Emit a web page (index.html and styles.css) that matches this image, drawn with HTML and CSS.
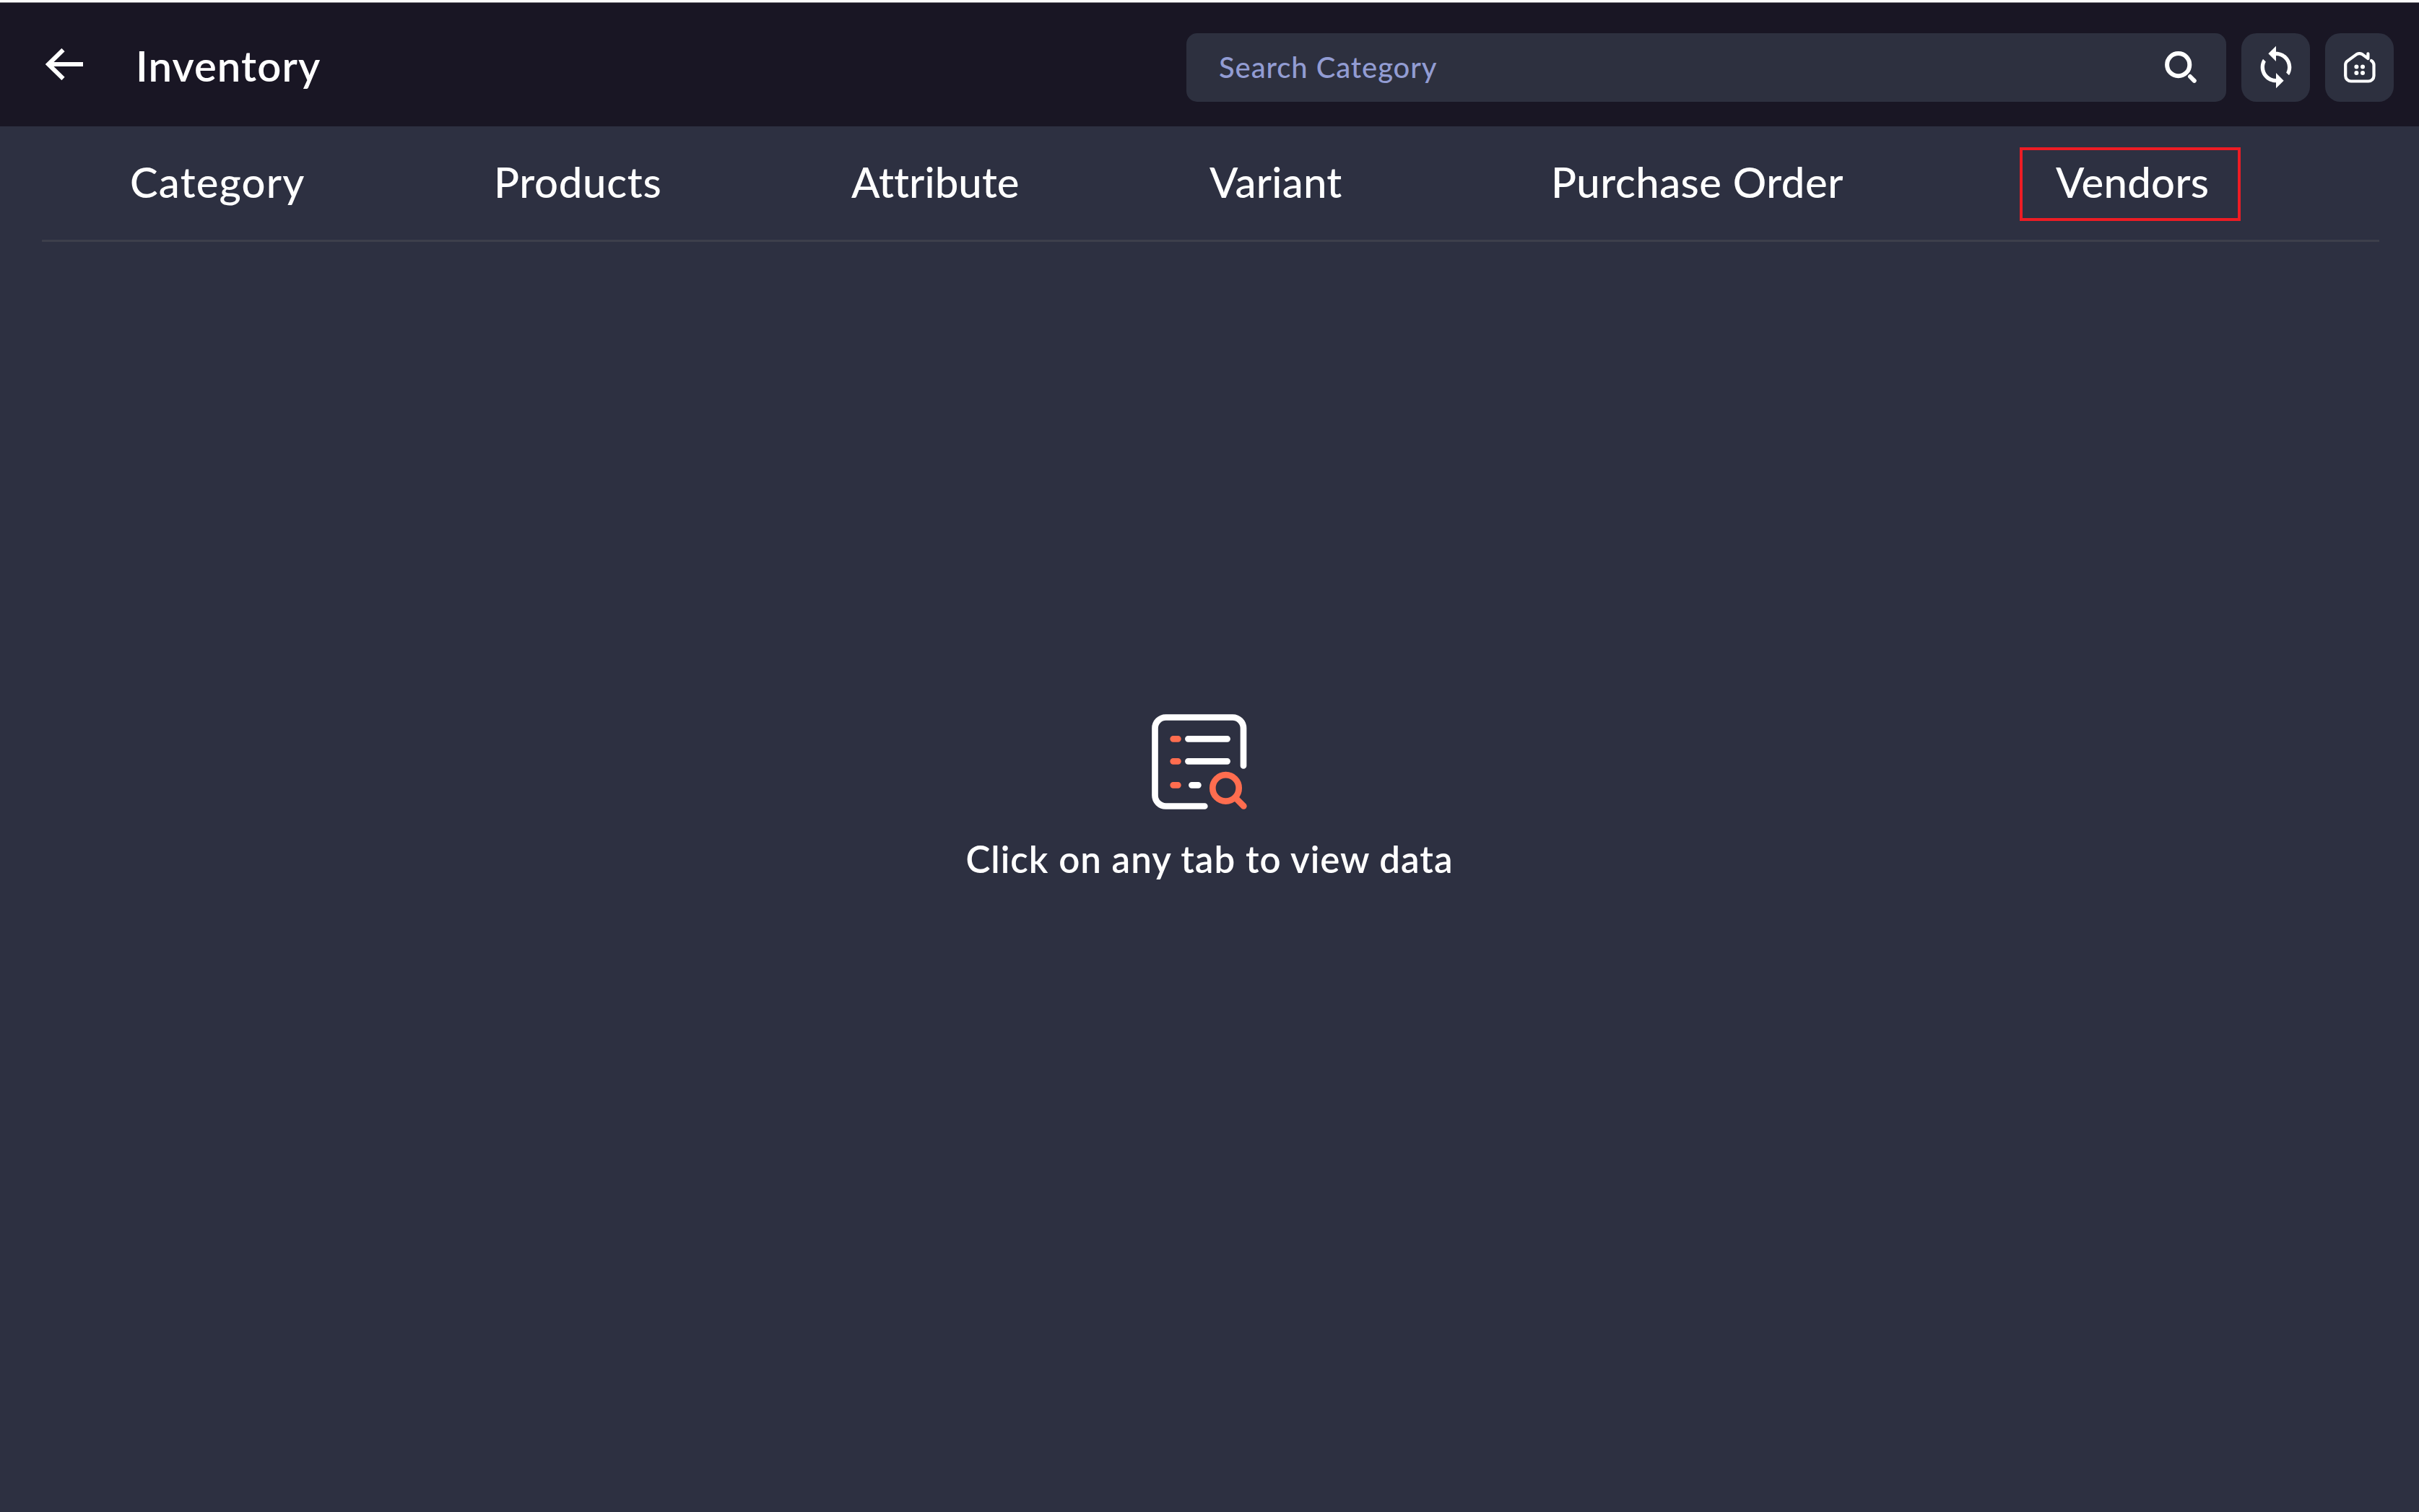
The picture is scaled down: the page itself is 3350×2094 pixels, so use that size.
FILE: index.html
```html
<!DOCTYPE html>
<html lang="en">
<head>
	<meta charset="utf-8">
	<meta name="viewport" content="width=device-width, initial-scale=1">
	<title>Inventory</title>

	<link rel="stylesheet" href="styles.css">
</head>
<body>
	<header>
		<a class="back" href="#" aria-label="Back">
			<svg width="52" height="44" viewBox="0 0 52 44">
				<path d="M24.500 2L4 22l20.500 20M4 22h48" fill="none" stroke="#fff" stroke-width="6"/>
			</svg>
		</a>
		<h1>Inventory</h1>
		<div class="search">
			<span class="placeholder">Search Category</span>
			<svg width="44" height="44" viewBox="0 0 44 44" fill="none" stroke="#fff" stroke-width="6" stroke-linecap="round">
				<circle cx="18.700" cy="18.700" r="15.600"/>
				<path d="M35 35l5.800 5.800"/>
			</svg>
		</div>
		<button class="icon-button" aria-label="Sync">
			<svg width="64" height="64" viewBox="0 0 24 24" fill="#fff">
				<path d="M12 4V1L8 5l4 4V6c3.310 0 6 2.690 6 6 0 1.010-.25 1.970-.7 2.800l1.460 1.460C19.540 15.030 20 13.570 20 12c0-4.420-3.580-8-8-8zm0 14c-3.310 0-6-2.690-6-6 0-1.010.25-1.970.7-2.800L5.240 7.740C4.460 8.970 4 10.430 4 12c0 4.420 3.580 8 8 8v3l4-4-4-4v3z"/>
			</svg>
		</button>
		<button class="icon-button" aria-label="Home">
			<svg width="44" height="43" viewBox="0 0 44 43">
				<path d="M38 12C40.300 13.500 41.500 14.800 41.500 18V33a7.500 7.500 0 0 1-7.500 7.500H9.700a7.500 7.500 0 0 1-7.500-7.500V17.500Q2.200 14.500 4.700 12.600L17 3.600Q21.500 .6 26 3.600L33.400 9V2.300" fill="none" stroke="#fff" stroke-width="4.200" stroke-linecap="round" stroke-linejoin="round"/>
				<g fill="#fff">
					<circle cx="17.400" cy="20.500" r="3"/>
					<circle cx="26" cy="20.500" r="3"/>
					<circle cx="17.400" cy="29" r="3"/>
					<circle cx="26" cy="29" r="3"/>
				</g>
			</svg>
		</button>
	</header>

	<nav>
		<a class="tab category" href="#">Category</a>
		<a class="tab products" href="#">Products</a>
		<a class="tab attribute" href="#">Attribute</a>
		<a class="tab variant" href="#">Variant</a>
		<a class="tab purchase-order" href="#">Purchase Order</a>
		<a class="tab vendors" href="#">Vendors</a>
	</nav>

	<main>
		<svg class="list-icon" width="132" height="132" viewBox="0 0 132 132" fill="none" stroke-width="8.700" stroke-linecap="round">
			<g stroke="#fff">
				<path d="M73.300 127.500H19.500a15 15 0 0 1-15-15V19.500a15 15 0 0 1 15-15H112a15 15 0 0 1 15 15V71.500"/>
				<path d="M50.400 34.300H104.600M50.400 65.300H104.600M55.400 98.300H64.400"/>
			</g>
			<g stroke="#ff6d4f">
				<path d="M29.700 34.300H36.400M29.700 65.300H36.400M29.700 98.300H36.400"/>
				<circle cx="102.500" cy="102.400" r="18.200"/>
				<path d="M116 116l11.300 11.300"/>
			</g>
		</svg>
		<p>Click on any tab to view data</p>
	</main>
</body>
</html>
```
FILE: styles.css
```css
* {
	margin: 0;
	box-sizing: border-box;
}

body {
	min-height: 100vh;
	display: flex;
	flex-direction: column;
	font-family: "Lato", sans-serif;
	font-variant-ligatures: none;
	color: #fff;
	background: #2d3041;
	border-top: 3px solid #fbfbfb;
}

svg {
	display: block;
	flex: none;
}

a {
	color: inherit;
	text-decoration: none;
}

header {
	display: flex;
	align-items: center;
	height: 172px;
	padding: 7px 35px 0 63px;
	background: #191624;
	border-top: 1px solid #85848b;
}

.back {
	padding-bottom: 8px;
}

h1 {
	margin-left: 73px;
	padding-bottom: 5px;
	font-size: 58px;
	line-height: 70px;
	font-weight: 600;
	letter-spacing: 1.1px;
}

.search {
	display: flex;
	align-items: center;
	justify-content: space-between;
	width: 1440px;
	height: 95px;
	margin-left: auto;
	padding: 0 41px 0 45px;
	background: #2d303f;
	border-radius: 15px;
}

.placeholder {
	padding-bottom: 1px;
	font-size: 40px;
	line-height: 48px;
	font-weight: 500;
	letter-spacing: 0.9px;
	color: #929cd3;
}

.icon-button {
	display: flex;
	align-items: center;
	justify-content: center;
	width: 95px;
	height: 95px;
	margin-left: 21px;
	padding: 0;
	background: #2d303f;
	border: none;
	border-radius: 21px;
}

nav {
	display: flex;
	align-items: flex-start;
	height: 160px;
	margin: 0 55px 0 58px;
	padding: 29px 0 0 122px;
	border-bottom: 3px solid #3d3f4b;
}

.tab {
	height: 102px;
	font-size: 58px;
	line-height: 95px;
	font-weight: 500;
	white-space: nowrap;
}

.category {
	width: 504px;
	letter-spacing: 1.2px;
}

.products {
	width: 495px;
	letter-spacing: 0.7px;
}

.attribute {
	width: 496px;
	letter-spacing: 0.1px;
}

.variant {
	width: 473px;
	letter-spacing: 0.3px;
}

.purchase-order {
	width: 649px;
	letter-spacing: 0.5px;
}

.vendors {
	width: 306px;
	padding-left: 46px;
	border: 4px solid #ed1c24;
	line-height: 87px;
	letter-spacing: 0.3px;
}

main {
	flex-grow: 1;
	display: flex;
	flex-direction: column;
	align-items: center;
	padding-top: 654px;
}

.list-icon {
	margin-right: 28px;
}

main p {
	margin-top: 39px;
	font-size: 51px;
	line-height: 60px;
	font-weight: 600;
	letter-spacing: 1px;
}
```
